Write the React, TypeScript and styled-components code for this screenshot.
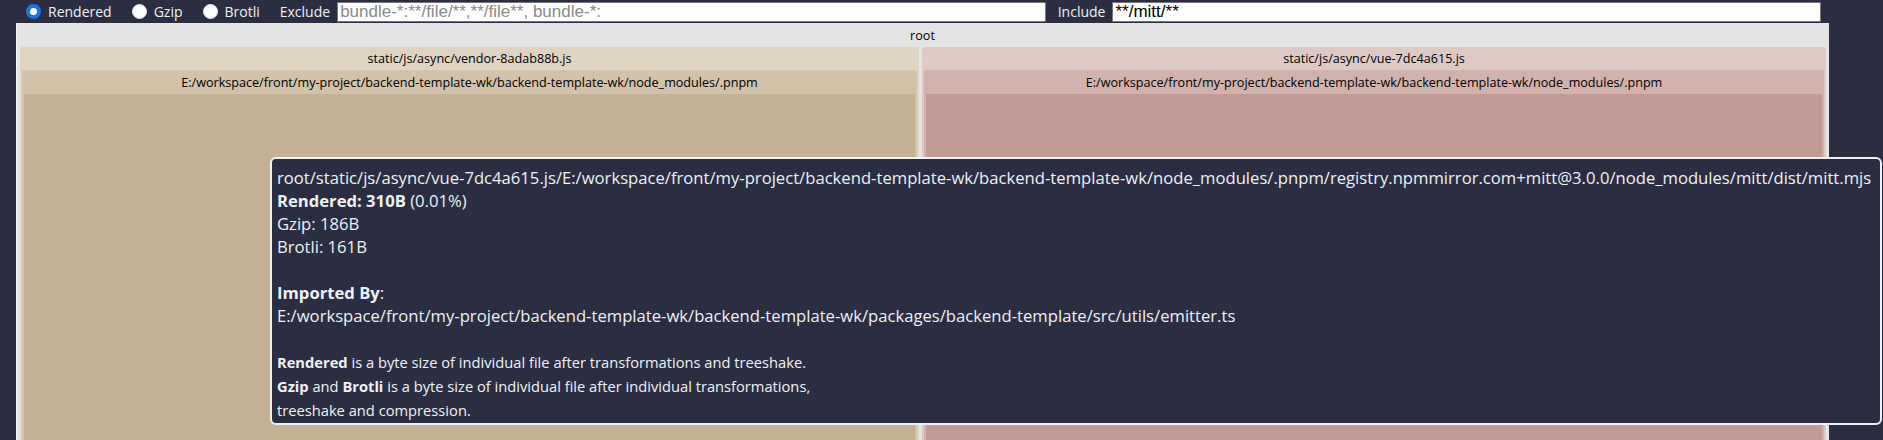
import React from 'react';
import styled, { createGlobalStyle } from 'styled-components';

const GlobalStyle = createGlobalStyle`
  html, body {
    margin: 0;
    padding: 0;
    background: #2b2d42;
    overflow: hidden;
  }
  body {
    font-family: "Open Sans", "Noto Sans", sans-serif;
    color: #edf2f4;
  }
`;

const Page = styled.div`
  position: relative;
  height: 440px;
  display: flex;
  flex-direction: column;
  overflow: hidden;
`;

const TopBar = styled.div`
  display: flex;
  align-items: center;
  height: 23px;
  padding: 0 62px 0 26px;
  font-size: 14px;
`;

const RadioLabel = styled.label`
  display: flex;
  align-items: center;
  gap: 7px;
  margin-right: 20px;
  white-space: nowrap;
`;

const Radio = styled.span<{ checked?: boolean }>`
  display: inline-block;
  box-sizing: border-box;
  width: 15px;
  height: 15px;
  border-radius: 50%;
  background: #fff;
  border: ${p => (p.checked ? '4px solid #1a73e8' : '1px solid #e6e6e6')};
`;

const FieldLabel = styled.span<{ gapLeft?: number }>`
  margin: 0 7px 0 ${p => p.gapLeft ?? 0}px;
  white-space: nowrap;
`;

const TextInput = styled.input`
  flex: 1;
  min-width: 0;
  height: 20px;
  box-sizing: border-box;
  border: 1px solid #767676;
  padding: 0 2px;
  font-family: "Liberation Sans", Arial, sans-serif;
  font-size: 17px;
  color: #000;
  background: #fff;
  outline: none;
  &::placeholder {
    color: #8a8a8a;
  }
`;

const Root = styled.div`
  flex: 1;
  display: flex;
  flex-direction: column;
  margin: 0 54px 0 16px;
  background: #e4e4e4;
  box-shadow: inset 1px 0 0 #f6f6f6;
`;

const NodeHeader = styled.div<{ h: number }>`
  height: ${p => p.h}px;
  flex: none;
  display: flex;
  align-items: center;
  justify-content: center;
  font-size: 12.6px;
  color: #000;
  white-space: nowrap;
  overflow: hidden;
`;

const RootBody = styled.div`
  flex: 1;
  display: flex;
  gap: 3px;
  padding: 0 3px 0 4px;
`;

const Node = styled.div<{ bg: string; grow?: number }>`
  flex: ${p => p.grow ?? 1} 1 0;
  display: flex;
  flex-direction: column;
  min-width: 0;
  padding: 0 2px;
  background: ${p => p.bg};
  border-radius: 2px 2px 0 0;
`;

const Leaf = styled.div<{ bg: string }>`
  flex: 1;
  background: ${p => p.bg};
`;

const Tooltip = styled.div`
  position: absolute;
  left: 270px;
  top: 157px;
  width: 1612px;
  height: 268px;
  box-sizing: border-box;
  padding: 7px 5px 5px;
  border: 2px solid #edf2f4;
  border-radius: 6px;
  background: #2b2d42;
  color: #edf2f4;
  font-size: 16.65px;
  line-height: 23px;
  white-space: nowrap;
  overflow: hidden;
`;

const Line = styled.div``;

const Note = styled.small`
  font-size: 14.7px;
`;

const chunks = [
  {
    name: 'static/js/async/vendor-8adab88b.js',
    grow: 899,
    colors: ['#dfd3c2', '#d2c2a9', '#c4b093'],
  },
  {
    name: 'static/js/async/vue-7dc4a615.js',
    grow: 904,
    colors: ['#dfc9c5', '#d1b2ac', '#c49a94'],
  },
];

const pnpmPath =
  'E:/workspace/front/my-project/backend-template-wk/backend-template-wk/node_modules/.pnpm';

export default function App() {
  return (
    <>
      <GlobalStyle />
      <Page>
        <TopBar>
          <RadioLabel>
            <Radio checked />
            Rendered
          </RadioLabel>
          <RadioLabel>
            <Radio />
            Gzip
          </RadioLabel>
          <RadioLabel>
            <Radio />
            Brotli
          </RadioLabel>
          <FieldLabel>Exclude</FieldLabel>
          <TextInput placeholder="bundle-*:**/file/**,**/file**, bundle-*:" readOnly />
          <FieldLabel gapLeft={12}>Include</FieldLabel>
          <TextInput defaultValue="**/mitt/**" readOnly />
        </TopBar>
        <Root>
          <NodeHeader h={24}>root</NodeHeader>
          <RootBody>
            {chunks.map(c => (
              <Node key={c.name} bg={c.colors[0]} grow={c.grow}>
                <NodeHeader h={23}>{c.name}</NodeHeader>
                <Node bg={c.colors[1]}>
                  <NodeHeader h={24}>{pnpmPath}</NodeHeader>
                  <Leaf bg={c.colors[2]} />
                </Node>
              </Node>
            ))}
          </RootBody>
        </Root>
        <Tooltip>
          <Line>
            root/static/js/async/vue-7dc4a615.js/E:/workspace/front/my-project/backend-template-wk/backend-template-wk/node_modules/.pnpm/registry.npmmirror.com+mitt@3.0.0/node_modules/mitt/dist/mitt.mjs
          </Line>
          <Line>
            <b>Rendered: 310B</b> (0.01%)
          </Line>
          <Line>Gzip: 186B</Line>
          <Line>Brotli: 161B</Line>
          <br />
          <Line>
            <b>Imported By</b>:
          </Line>
          <Line>
            E:/workspace/front/my-project/backend-template-wk/backend-template-wk/packages/backend-template/src/utils/emitter.ts
          </Line>
          <br />
          <Note>
            <b>Rendered</b> is a byte size of individual file after transformations and treeshake.
            <br />
            <b>Gzip</b> and <b>Brotli</b> is a byte size of individual file after individual transformations,
            <br />
            treeshake and compression.
          </Note>
        </Tooltip>
      </Page>
    </>
  );
}
